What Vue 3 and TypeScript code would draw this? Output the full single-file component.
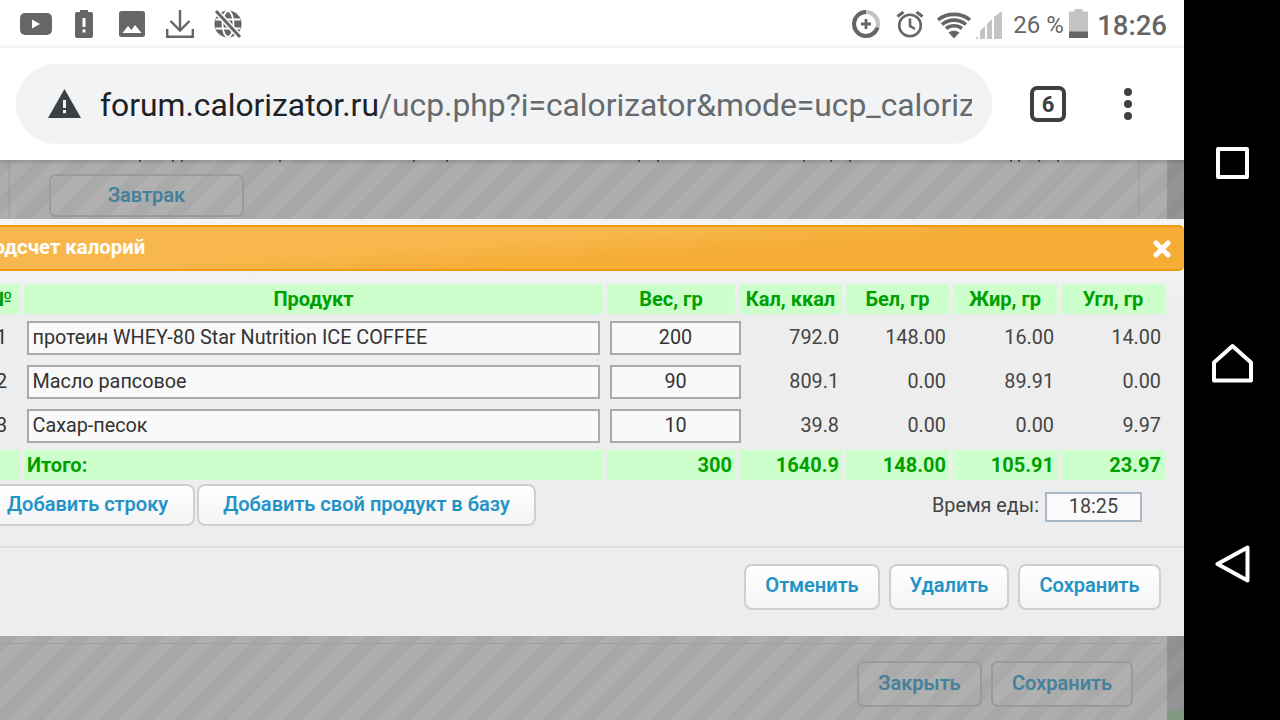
<script setup lang="ts">
interface Row { id: string; name: string; weight: string; vals: string[] }
const rows: Row[] = [
  { id: '1', name: 'протеин WHEY-80 Star Nutrition ICE COFFEE', weight: '200', vals: ['792.0', '148.00', '16.00', '14.00'] },
  { id: '2', name: 'Масло рапсовое', weight: '90', vals: ['809.1', '0.00', '89.91', '0.00'] },
  { id: '3', name: 'Сахар-песок', weight: '10', vals: ['39.8', '0.00', '0.00', '9.97'] },
]
const heads: string[] = ['Вес, гр', 'Кал, ккал', 'Бел, гр', 'Жир, гр', 'Угл, гр']
const totals: string[] = ['300', '1640.9', '148.00', '105.91', '23.97']
const ticks: number[] = [139, 172, 181, 279, 413, 446, 638, 657, 803, 830, 849, 1010, 1018, 1038, 1057]
</script>

<template>
  <div class="screen">
    <div class="main">
      <div class="status">
        <div class="icons-left">
          <svg width="32" height="22" viewBox="0 0 32 22"><rect width="32" height="22" rx="5" fill="#666"/><path d="M12 6.500v9l8-4.500z" fill="#fff"/></svg>
          <svg width="18" height="28" viewBox="0 0 18 28"><path d="M5 0h8v2h3a2 2 0 0 1 2 2v22a2 2 0 0 1-2 2H2a2 2 0 0 1-2-2V4a2 2 0 0 1 2-2h3z" fill="#666"/><path d="M7.500 8h3v9h-3zM7.500 19.500h3v3h-3z" fill="#fff"/></svg>
          <svg width="26" height="26" viewBox="0 0 26 26"><rect width="26" height="26" rx="2.500" fill="#666"/><path d="M3.500 22l5.500-7 3.500 4 3.500-5 6.500 8z" fill="#fff"/></svg>
          <svg width="28" height="28" viewBox="0 0 28 28" fill="none" stroke="#666" stroke-width="2.400"><path d="M14 0v20M4.500 11l9.500 9.500 9.500-9.500M1.200 19v7.800h25.600V19"/></svg>
          <svg width="28" height="28" viewBox="0 0 28 28"><circle cx="14" cy="14" r="13.600" fill="#666"/><g fill="none" stroke="#fff" stroke-width="1.800"><ellipse cx="14" cy="14" rx="5.500" ry="13"/><path d="M1.500 9.500h25M1.500 18.500h25"/><path d="M2 1l24 26" stroke-width="6"/></g><path d="M2 1l24 26" stroke="#666" stroke-width="3"/></svg>
        </div>
        <div class="icons-right">
          <svg class="r-saver" width="28" height="28" viewBox="0 0 28 28" fill="none"><circle cx="14" cy="14" r="12" stroke="#c4c4c4" stroke-width="4"/><path d="M14 2a12 12 0 1 0 11.500 15.500" stroke="#666" stroke-width="4"/><path d="M14 9v10M9 14h10" stroke="#666" stroke-width="2.800"/></svg>
          <svg class="r-alarm" width="28" height="28" viewBox="0 0 28 28" fill="none" stroke="#666" stroke-width="2.600"><circle cx="14" cy="15.500" r="10.800"/><path d="M14 8.500v7.500l5 3"/><path d="M1.500 6.500l6-4.500M26.500 6.500l-6-4.500" stroke-width="3"/></svg>
          <svg class="r-wifi" width="34" height="28" viewBox="0 0 34 28" fill="none" stroke="#666" stroke-width="3.600"><path d="M1 9C9.800 1.500 24.200 1.500 33 9M5 13.500c6.800-5.800 17.200-5.800 24 0M9 17.500c4.600-3.700 11.400-3.700 16 0"/><path d="M11.500 21.500c3-2.300 8-2.300 11 0L17 27.500z" fill="#666" stroke="none"/></svg>
          <svg class="r-signal" width="28" height="28" viewBox="0 0 28 28"><path d="M0 28l3-3v3zM5 28v-8l5-5v13zM12 28V13l5-5v20zM19 28V6l8-6v28z" fill="#c4c4c4"/></svg>
          <span class="pct">26 %</span>
          <svg class="r-batt" width="19" height="29" viewBox="0 0 19 29"><path d="M5.500 0h8v2.500H19V29H0V2.500h5.500z" fill="#c4c4c4"/><rect y="22.500" width="19" height="6.500" fill="#666"/></svg>
          <span class="time">18:26</span>
        </div>
      </div>

      <div class="toolbar">
        <div class="pill">
          <svg class="warn" width="33" height="29" viewBox="0 0 33 29"><path d="M16.500 0L33 29H0z" fill="#3c4043"/><path d="M15 11h3v8h-3zM15 21h3v3.200h-3z" fill="#f1f3f4"/></svg>
          <div class="url"><span class="host">forum.calorizator.ru</span><span class="path">/ucp.php?i=calorizator&amp;mode=ucp_calorizator</span></div>
        </div>
        <div class="tabs">6</div>
        <div class="dots"><i></i><i></i><i></i></div>
      </div>

      <div class="web">
        <div class="band band-top">
          <svg class="ticks" width="1184" height="2"><rect v-for="t in ticks" :key="t" :x="t" y="0" width="2" height="2" fill="#555"/></svg>
          <div class="top-panel">
            <div class="top-inner">
              <button class="ghost zavtrak">Завтрак</button>
            </div>
          </div>
          <div class="side"></div>
        </div>

        <div class="modal">
          <div class="modal-head">
            <span class="title">Подсчет калорий</span>
            <svg class="close" width="18" height="18" viewBox="0 0 18 18"><path d="M3 3l12 12M15 3L3 15" stroke="#fff" stroke-width="5" stroke-linecap="round"/></svg>
          </div>
          <div class="modal-body">
            <div class="grid">
              <div class="cell th first">№</div>
              <div class="cell th">Продукт</div>
              <div v-for="h in heads" :key="h" class="cell th">{{ h }}</div>

              <template v-for="r in rows" :key="r.id">
                <div class="cell idx">{{ r.id }}</div>
                <div class="cell inp-wrap"><div class="inp">{{ r.name }}</div></div>
                <div class="cell inp-wrap w"><div class="inp c">{{ r.weight }}</div></div>
                <div v-for="(v, i) in r.vals" :key="i" class="cell num">{{ v }}</div>
              </template>

              <div class="cell tot"></div>
              <div class="cell tot left">Итого:</div>
              <div v-for="t in totals" :key="t" class="cell tot">{{ t }}</div>
            </div>

            <div class="actions">
              <button class="btn add1">Добавить строку</button>
              <button class="btn add2">Добавить свой продукт в базу</button>
              <span class="meal-label">Время еды:</span>
              <div class="meal-time">18:25</div>
            </div>
          </div>
          <div class="modal-foot">
            <button class="btn f1">Отменить</button>
            <button class="btn f2">Удалить</button>
            <button class="btn f3">Сохранить</button>
          </div>
        </div>

        <div class="band band-bottom">
          <div class="bottom-panel">
            <div class="rule"></div>
            <div class="ghost-row">
              <button class="ghost g1">Закрыть</button>
              <button class="ghost g2">Сохранить</button>
            </div>
          </div>
          <div class="side side-bottom"><div class="side-green"></div></div>
        </div>
      </div>
    </div>

    <div class="nav">
      <div class="square"></div>
      <svg width="41" height="40" viewBox="0 0 41 40" fill="none" stroke="#fff" stroke-width="4" stroke-linejoin="round"><path d="M20.500 3L39 19.500V37.500H2V19.500z"/></svg>
      <svg width="35" height="38" viewBox="0 0 35 38" fill="none" stroke="#fff" stroke-width="4" stroke-linejoin="round"><path d="M32.500 2.500v33L2.500 19z"/></svg>
    </div>
  </div>
</template>

<style>
html, body { margin: 0; background: #000; }
</style>

<style scoped>
.screen { display: flex; width: 1280px; height: 720px; overflow: hidden; font-family: Roboto, "Liberation Sans", sans-serif; color: #333; }
.main { width: 1184px; display: flex; flex-direction: column; background: #fff; flex: none; }
.nav { width: 96px; flex: none; background: #000; display: flex; flex-direction: column; align-items: center; padding-top: 147px; box-sizing: border-box; }
.square { width: 33px; height: 32px; border: 4px solid #fff; box-sizing: border-box; border-radius: 2px; margin-left: 1px; }
.nav svg:nth-of-type(1) { margin-top: 164px; }
.nav svg:nth-of-type(2) { margin-top: 162px; }

.status { height: 48px; display: flex; justify-content: space-between; flex: none; }
.icons-left { display: flex; align-items: center; padding-left: 20px; }
.icons-left svg:nth-child(2) { margin-left: 23px; }
.icons-left svg:nth-child(3) { margin-left: 26px; }
.icons-left svg:nth-child(4) { margin-left: 21px; }
.icons-left svg:nth-child(5) { margin-left: 20px; }
.icons-right { display: flex; align-items: center; padding-right: 17px; }
.r-alarm { margin-left: 16px; }
.r-wifi { margin-left: 13px; margin-top: 2px; }
.r-signal { margin-left: 4px; margin-top: 2px; }
.pct { font-size: 24px; color: #666; margin-left: 10px; width: 50px; white-space: nowrap; margin-top: 2px; }
.r-batt { margin-left: 6px; margin-top: -1px; }
.time { font-size: 27.500px; font-weight: 500; color: #666; margin-left: 9px; margin-top: 2px; }

.toolbar { height: 112px; flex: none; display: flex; align-items: flex-start; padding: 16px 0 0 16px; box-sizing: border-box; position: relative; z-index: 2; box-shadow: 0 1px 5px rgba(0,0,0,.22); background: #fff; }
.pill { width: 976px; height: 80px; border-radius: 40px; background: #f1f3f4; display: flex; align-items: center; padding-left: 32px; padding-right: 20px; box-sizing: border-box; flex: none; }
.warn { flex: none; margin-top: -1px; }
.url { margin-left: 19px; margin-top: 1px; font-size: 31.800px; white-space: nowrap; overflow: hidden; flex: 1; line-height: 40px; }
.host { color: #202124; }
.path { color: #666a6e; }
.tabs { width: 36px; height: 36px; border: 4px solid #3c4043; border-radius: 7px; box-sizing: border-box; margin: 22px 0 0 38px; font-size: 22px; font-weight: 700; color: #3c4043; display: flex; align-items: center; justify-content: center; flex: none; }
.dots { margin: 24px 0 0 58px; display: flex; flex-direction: column; gap: 4px; }
.dots i { width: 8px; height: 8px; border-radius: 50%; background: #3c4043; display: block; }

.web { flex: 1; display: flex; flex-direction: column; min-height: 0; }
.band { background-image: repeating-linear-gradient(135deg, #a8a8a8 0 12px, #aeaeae 13px 25px, #a8a8a8 26px); overflow: hidden; flex: none; display: flex; position: relative; }
.band-top { height: 59px; }
.ticks { position: absolute; left: 0; top: 0; }
.top-panel { width: 1167px; flex: none; padding-left: 8px; box-sizing: border-box; }
.top-inner { width: 1132px; height: 100%; box-sizing: border-box; border-left: 2px solid rgba(0,0,0,.05); border-right: 2px solid rgba(0,0,0,.05); padding: 14px 0 0 39px; }
.side { flex: 1; background: rgba(0,0,0,.14); }
.ghost { font-family: inherit; font-size: 20px; font-weight: 500; color: #44819c; -webkit-text-stroke: 0.200px #44819c; background: rgba(255,255,255,.03); border: 2px solid #9a9a9a; border-radius: 7px; box-sizing: border-box; padding: 0 0 3px; }
.zavtrak { width: 195px; height: 43px; display: block; padding-bottom: 2px; }

.modal { height: 417px; flex: none; display: flex; flex-direction: column; background: linear-gradient(#f8f8f8, #ededed 90px); border-top: 5px solid #f4f4f4; box-sizing: border-box; overflow: hidden; }
.modal-head { height: 46px; flex: none; box-sizing: border-box; margin-top: 1px; border: solid #ef9a14; border-width: 2px 0; border-radius: 0 5px 5px 0; background: linear-gradient(176deg, #f7b74c 0 40%, #f5ad35 60%); display: flex; align-items: center; justify-content: space-between; padding-right: 13px; margin-left: -9px; }
.title { font-size: 20.400px; font-weight: 700; color: #fff; margin-left: -12px; margin-top: -3px; }
.close { flex: none; margin-top: 1px; }
.modal-body { height: 0; flex: 1; padding-top: 13px; overflow: hidden; }
.grid { display: grid; grid-template-columns: 60px 579px 128px 103px 103px 104px 104px; column-gap: 4px; grid-template-rows: 30px 44px 44px 44px 34px; margin-left: -40px; font-size: 19.800px; }
.cell { display: flex; align-items: center; }
.th { background: #ccffcc; color: #00a000; font-weight: 700; justify-content: center; font-size: 20px; }
.th.first { justify-content: flex-end; padding-right: 8px; }
.idx { justify-content: flex-end; color: #333; padding-right: 13px; padding-top: 2px; box-sizing: border-box; }
.num { justify-content: flex-end; padding-right: 3px; color: #444; padding-top: 3px; box-sizing: border-box; }
.num:nth-child(7n) { padding-right: 4px; }
.inp-wrap { align-items: flex-start; padding: 7px 3px 0; box-sizing: border-box; }
.inp { width: 100%; height: 34px; border: 2px solid #aaa; background: #f9f9f9; box-sizing: border-box; padding-left: 3.500px; line-height: 29px; color: #333; white-space: nowrap; }
.c { text-align: center; padding-left: 0; }
.tot { background: #ccffcc; color: #00a000; font-weight: 700; justify-content: flex-end; padding-right: 3px; margin-top: 4px; font-size: 20px; }
.tot:last-child { padding-right: 4px; }
.tot.left { justify-content: flex-start; padding-left: 3px; }
.w { width: 134px; padding-right: 0; }

.actions { display: flex; align-items: center; margin-top: 4px; height: 42px; }
.btn { font-family: inherit; font-size: 20px; font-weight: 500; color: #1f93c6; -webkit-text-stroke: 0.200px #1f93c6; border: 2px solid #cfcfcf; border-radius: 8px; background: linear-gradient(#fff, #f4f4f4); box-sizing: border-box; padding: 0 0 2px; }
.add1 { width: 216px; height: 42px; margin-left: -21px; text-align: right; padding-right: 25px; }
.add2 { width: 339px; height: 42px; margin-left: 2px; }
.meal-label { margin-left: 396px; font-size: 19.800px; color: #444; }
.meal-time { width: 97px; height: 30px; margin-left: 6px; border: 2px solid #a8b8c8; background: #fafafa; box-sizing: border-box; text-align: center; line-height: 26px; font-size: 19.800px; color: #444; margin-top: 3px; }
.modal-foot { height: 90px; flex: none; border-top: 2px solid #dfdfdf; box-sizing: border-box; display: flex; align-items: flex-start; justify-content: flex-end; padding: 16px 23px 0 0; gap: 9px; }
.modal-foot .btn { height: 46px; padding-bottom: 4px; }
.f1 { width: 136px; }
.f2 { width: 120px; }
.f3 { width: 143px; }

.band-bottom { flex: 1; }
.bottom-panel { width: 1167px; flex: none; box-sizing: border-box; padding-top: 7px; }
.rule { height: 1px; background: #a0a0a0; margin-right: 6px; }
.ghost-row { display: flex; justify-content: flex-end; gap: 9px; padding-right: 34px; margin-top: 17px; }
.g1 { width: 125px; height: 46px; }
.g2 { width: 142px; height: 46px; }
.side-bottom { display: flex; flex-direction: column; justify-content: flex-end; }
.side-green { height: 9px; background: #7f9a7f; box-shadow: 0 -10px 0 -9px #7e7e7e; }
</style>
